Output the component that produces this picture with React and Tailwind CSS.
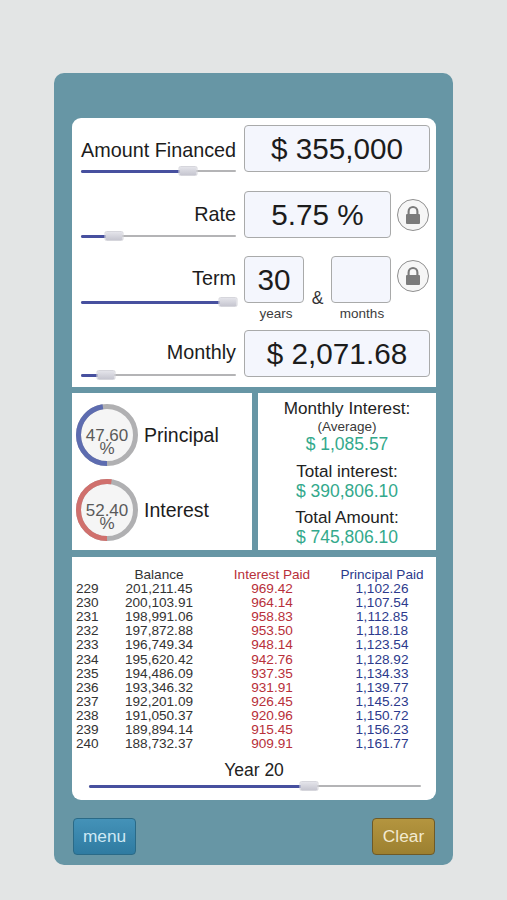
const rows = [
  ["229", "201,211.45", "969.42", "1,102.26"],
  ["230", "200,103.91", "964.14", "1,107.54"],
  ["231", "198,991.06", "958.83", "1,112.85"],
  ["232", "197,872.88", "953.50", "1,118.18"],
  ["233", "196,749.34", "948.14", "1,123.54"],
  ["234", "195,620.42", "942.76", "1,128.92"],
  ["235", "194,486.09", "937.35", "1,134.33"],
  ["236", "193,346.32", "931.91", "1,139.77"],
  ["237", "192,201.09", "926.45", "1,145.23"],
  ["238", "191,050.37", "920.96", "1,150.72"],
  ["239", "189,894.14", "915.45", "1,156.23"],
  ["240", "188,732.37", "909.91", "1,161.77"],
];

function Slider({ pct, className = "" }) {
  return (
    <div className={`relative h-[2px] rounded-full bg-[#b4b4b6] ${className}`}>
      <div className="absolute top-[-0.5px] left-0 h-[3px] rounded-full bg-[#47509f]" style={{ width: `${pct}%` }} />
      <div
        className="absolute top-[-4px] h-[10px] w-[19px] -translate-x-1/2 rounded-[2px] border border-[#d6d6dc] bg-gradient-to-b from-[#e4e4ea] to-[#c6c6d0]"
        style={{ left: `${pct}%` }}
      />
    </div>
  );
}

function Field({ children, className = "" }) {
  return (
    <div className={`flex h-[47px] shrink-0 items-center justify-center rounded-[4px] border-[1.5px] border-[#a9aaaa] bg-[#f4f6fd] text-[29.7px] leading-none text-[#1c1c1c] ${className}`}>
      {children}
    </div>
  );
}

function Lock() {
  return (
    <div className="-ml-[2px] flex h-[32px] w-[32px] items-center justify-center rounded-full border-[1.5px] border-[#8f8f8f] bg-[#f6f6f6]">
      <svg width="18" height="20" viewBox="0 0 18 20">
        <path d="M4.6 9V6.4a4.4 4.4 0 0 1 8.8 0V9" fill="none" stroke="#7b7b7b" strokeWidth="2.1" />
        <rect x="2" y="9" width="14" height="10" rx="1" fill="#7b7b7b" />
      </svg>
    </div>
  );
}

function Ring({ value, color }) {
  const pct = parseFloat(value);
  const r = 28.5;
  const c = 2 * Math.PI * r;
  return (
    <div className="relative h-[62px] w-[62px] shrink-0">
      <svg width="62" height="62" viewBox="0 0 62 62" className="absolute inset-0">
        <circle cx="31" cy="31" r={r} fill="#f5f5f5" stroke="#b0b0b2" strokeWidth="5" />
        <circle
          cx="31"
          cy="31"
          r={r}
          fill="none"
          stroke={color}
          strokeWidth="5"
          strokeDasharray={`${(c * pct) / 100} ${c}`}
          transform="rotate(90 31 31)"
        />
      </svg>
      <div className="absolute inset-0 flex items-center justify-center pt-[13px]">
        <div className="w-[50px] text-center text-[17px] leading-[13px] text-[#5a5a5a]">{value} %</div>
      </div>
    </div>
  );
}

function Label({ children }) {
  return <div className="whitespace-nowrap text-right text-[19.8px] leading-[24px] text-[#1c1c1c]">{children}</div>;
}

export default function App() {
  return (
    <div className="h-[900px] w-[507px] bg-[#e3e5e5] pt-[73px] font-['Liberation_Sans',Arial,sans-serif]">
      <div className="ml-[54px] flex h-[792px] w-[399px] flex-col rounded-[10px] bg-[#6796a5] pl-[18px] pr-[17px] pt-[45px]">
        <div className="h-[269px] rounded-t-[9px] bg-white pl-[9px] pr-[6px] pt-[7px]">
          <div className="flex h-[47px] gap-[8px]">
            <div className="flex w-[155px] shrink-0 flex-col pt-[13px]">
              <Label>Amount Financed</Label>
              <Slider pct={68.8} className="mt-[8px]" />
            </div>
            <Field className="w-[186px]">$ 355,000</Field>
          </div>
          <div className="mt-[19px] flex h-[47px] gap-[8px]">
            <div className="flex w-[155px] shrink-0 flex-col pt-[11px]">
              <Label>Rate</Label>
              <Slider pct={21} className="mt-[9px]" />
            </div>
            <Field className="w-[147px]">5.75 %</Field>
            <div className="flex items-center"><Lock /></div>
          </div>
          <div className="mt-[18px] flex h-[65px] gap-[8px]">
            <div className="flex w-[155px] shrink-0 flex-col pt-[10px]">
              <Label>Term</Label>
              <Slider pct={95} className="mt-[11px]" />
            </div>
            <div className="flex w-[147px] shrink-0 flex-col">
              <div className="flex h-[47px] justify-between">
                <Field className="w-[60px]">30</Field>
                <div className="mt-[31px] self-start text-[17.5px] leading-[22px] text-[#333]">&amp;</div>
                <Field className="w-[60px]" />
              </div>
              <div className="mt-[3px] flex justify-between text-[13.5px] leading-[16px] text-[#3c3c3c]">
                <span className="w-[64px] text-center">years</span>
                <span className="w-[58px] text-center">months</span>
              </div>
            </div>
            <div className="pt-[4px]"><Lock /></div>
          </div>
          <div className="mt-[9px] flex h-[47px] gap-[8px]">
            <div className="flex w-[155px] shrink-0 flex-col pt-[10px]">
              <Label>Monthly</Label>
              <Slider pct={16.3} className="mt-[10px]" />
            </div>
            <Field className="w-[186px]">$ 2,071.68</Field>
          </div>
        </div>

        <div className="mt-[6px] flex h-[157px] gap-[6px]">
          <div className="flex w-[180px] flex-col gap-[13px] bg-white pl-[4px] pt-[11px]">
            <div className="flex items-center gap-[6px]">
              <Ring value="47.60" color="#5d6cb0" />
              <span className="pt-[1px] text-[19.5px] text-[#1c1c1c]">Principal</span>
            </div>
            <div className="flex items-center gap-[6px]">
              <Ring value="52.40" color="#d0706d" />
              <span className="pt-[1px] text-[19.5px] text-[#1c1c1c]">Interest</span>
            </div>
          </div>
          <div className="flex-1 bg-white pt-[6px] text-center text-[#222]">
            <div className="text-[17.1px] leading-[20px]">Monthly Interest:</div>
            <div className="text-[13.5px] leading-[15px] text-[#3a3a3a]">(Average)</div>
            <div className="text-[17.5px] leading-[21px] text-[#33a98c]">$ 1,085.57</div>
            <div className="mt-[6px] text-[17.1px] leading-[21px]">Total interest:</div>
            <div className="text-[17.5px] leading-[18px] text-[#33a98c]">$ 390,806.10</div>
            <div className="mt-[7px] text-[17.1px] leading-[21px]">Total Amount:</div>
            <div className="text-[17.5px] leading-[19px] text-[#33a98c]">$ 745,806.10</div>
          </div>
        </div>

        <div className="mt-[7px] h-[243px] rounded-b-[9px] bg-white pt-[11px] text-[13.6px] leading-[14.09px] text-[#333]">
          <div className="grid grid-cols-[44px_78px_142px_84px] pl-[4px]">
            <div />
            <div className="text-center">Balance</div>
            <div className="pl-[6px] text-center text-[#b8303a]">Interest Paid</div>
            <div className="whitespace-nowrap text-center text-[#2c3a8c]">Principal Paid</div>
            {rows.map((r) => (
              <div key={r[0]} className="contents">
                <div>{r[0]}</div>
                <div className="text-center">{r[1]}</div>
                <div className="pl-[6px] text-center text-[#b8303a]">{r[2]}</div>
                <div className="text-center text-[#2c3a8c]">{r[3]}</div>
              </div>
            ))}
          </div>
          <div className="mt-[9px] text-center text-[17.5px] leading-[20px] text-[#222]">Year 20</div>
          <div className="pl-[17px] pr-[15px] pt-[5px]">
            <Slider pct={66.3} />
          </div>
        </div>

        <div className="mt-[18px] flex justify-between pl-[1px]">
          <div className="flex h-[37px] w-[63px] items-center justify-center rounded-[4px] border-[1.5px] border-[#2a6a87] bg-gradient-to-b from-[#4492b8] to-[#2f7ba1] text-[17.3px] text-[#cfe9f5]">menu</div>
          <div className="mr-[1px] flex h-[37px] w-[63px] items-center justify-center rounded-[4px] border-[1.5px] border-[#6e5a28] bg-gradient-to-b from-[#b4953f] to-[#9c8030] text-[17.3px] text-[#f3ead0]">Clear</div>
        </div>
      </div>
    </div>
  );
}
